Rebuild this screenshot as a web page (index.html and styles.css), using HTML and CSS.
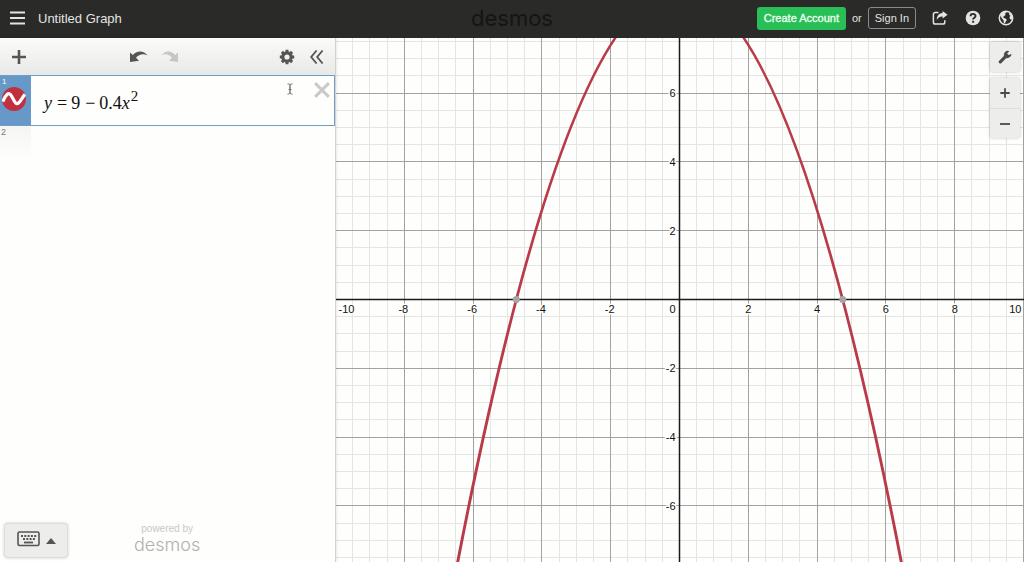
FILE: index.html
```html
<!DOCTYPE html>
<html lang="en">
<head>
<meta charset="utf-8">
<meta name="viewport" content="width=device-width, initial-scale=1">
<title>Untitled Graph</title>
<link rel="stylesheet" href="styles.css">
</head>
<body>
<header class="topbar">
  <div class="topbar-left">
    <button class="icon-btn" aria-label="Open menu">
      <svg width="16" height="14" viewBox="0 0 16 14"><path d="M0 1.500h15M0 7h15M0 12.500h15" stroke="currentColor" stroke-width="2"/></svg>
    </button>
    <span class="graph-title">Untitled Graph</span>
  </div>
  <span class="brand">desmos</span>
  <div class="topbar-right">
    <button class="btn btn-create">Create Account</button>
    <span class="or">or</span>
    <button class="btn btn-signin">Sign In</button>
    <div class="topbar-icons">
      <button class="icon-btn" aria-label="Share">
        <svg width="16" height="16" viewBox="0 0 16 16"><path d="M6.500 2.600H3.200a1.800 1.800 0 0 0-1.800 1.800v7.800A1.800 1.800 0 0 0 3.200 14h7.800a1.800 1.800 0 0 0 1.800-1.800v-2" fill="none" stroke="currentColor" stroke-width="1.500"/><path d="M10.600 1 15.600 4.800l-5 3.800V6.500C7.600 6.400 6 7.600 4.800 10 4.700 6 6.900 3.300 10.600 3.100z" fill="currentColor"/></svg>
      </button>
      <button class="icon-btn" aria-label="Help">
        <svg width="16" height="16" viewBox="0 0 16 16"><circle cx="8" cy="8" r="7.300" fill="currentColor"/><path d="M5.600 6.200C5.600 3.200 10.500 3.200 10.500 6c0 1.700-2.400 1.700-2.400 3.600" fill="none" stroke="#2a2a29" stroke-width="1.900"/><path d="M7.100 10.800h2v1.900h-2z" fill="#2a2a29"/></svg>
      </button>
      <button class="icon-btn" aria-label="Language">
        <svg width="16" height="16" viewBox="0 0 16 16"><circle cx="8" cy="8" r="6.700" fill="none" stroke="currentColor" stroke-width="1.500"/><path d="M2 4.500 4.500 2l3.600-.8.400 1.600-1.700 1 .9 1.200-2 1.300-.4 1.500 2.200.6 1.500 1.600-1.300 1.500-.7 2.100-1.200-.6-.2-2.500-1.600-2L2.800 6.400zM11.300 2.400l2.600 2.800.6 3.100-1.300 1.400-1.400-.7-.3-2 1-1.200-1.400-1z" fill="currentColor"/></svg>
      </button>
    </div>
  </div>
</header>

<main class="workspace">
  <section class="panel" aria-label="Expression list">
    <div class="toolbar">
      <button class="tool" aria-label="Add item">
        <svg width="16" height="16" viewBox="0 0 16 16"><path d="M8 1v14M1 8h14" stroke="currentColor" stroke-width="2.600"/></svg>
      </button>
      <div class="tool-group history">
        <button class="tool" aria-label="Undo">
          <svg width="18" height="12" viewBox="0 0 18 12"><path d="M0 1.500 2.800 4C6.500-.7 14-1 17.500 4.500 13.500 2 9 3 6 6.800L9 9.800 0 11z" fill="currentColor"/></svg>
        </button>
        <button class="tool" aria-label="Redo" disabled>
          <svg width="18" height="12" viewBox="0 0 18 12"><path d="M17 1.500 14.200 4C10.500-.7 4-1 .5 4.500 4.500 2 8 3 11 6.800L8 9.800l9 1.200z" fill="currentColor"/></svg>
        </button>
      </div>
      <div class="tool-group">
        <button class="tool" aria-label="Edit list">
          <svg width="16" height="16" viewBox="0 0 16 16"><circle cx="8" cy="8" r="4.200" fill="none" stroke="currentColor" stroke-width="3.200"/><path d="M8 .8v3M8 12.200v3M.8 8h3M12.200 8h3M2.900 2.900l2 2M11.100 11.100l2 2M2.900 13.100l2-2M11.100 4.900l2-2" stroke="currentColor" stroke-width="3"/></svg>
        </button>
        <button class="tool" aria-label="Hide list">
          <svg width="14" height="14" viewBox="0 0 14 14"><path d="M6.600.5 1.200 7l5.400 6.500M12.600.5 7.200 7l5.400 6.500" fill="none" stroke="currentColor" stroke-width="1.800"/></svg>
        </button>
      </div>
    </div>

    <div class="expression selected">
      <div class="tab">
        <span class="index">1</span>
        <button class="curve-toggle" aria-label="Hide curve">
          <svg width="24" height="24" viewBox="0 0 24 24"><circle cx="12" cy="12" r="12" fill="#c0303f"/><path d="M.8 14.500C3.500 8.500 6.500 3.500 9.500 9S14 19 17 15.500 20.500 10 23 7.500" fill="none" stroke="#fff" stroke-width="3.200"/></svg>
        </button>
      </div>
      <div class="formula" role="textbox" aria-label="Expression 1" contenteditable="true" spellcheck="false"><i>y</i><span class="op">=</span>9<span class="op">−</span>0.4<i>x</i><sup>2</sup></div>
      <svg class="caret-pointer" width="6" height="12" viewBox="0 0 6 12"><path d="M.5.8Q3 .8 3 2.500v7q0 1.700-2.500 1.700M5.500.8Q3 .8 3 2.500v7q0 1.700 2.500 1.700M1.500 6.500h3" fill="none" stroke="#777" stroke-width="1"/></svg>
      <button class="remove" aria-label="Delete expression">
        <svg width="16" height="16" viewBox="0 0 14 14"><path d="m1 1 12 12M13 1 1 13" stroke="currentColor" stroke-width="2.600"/></svg>
      </button>
    </div>
    <div class="expression">
      <div class="tab tab-empty"><span class="index">2</span></div>
    </div>

    <footer class="panel-footer">
      <button class="keypad" aria-label="Show keypad">
        <svg width="23" height="16" viewBox="0 0 23 16"><rect x="1" y="1" width="21" height="13.500" rx="1.500" fill="none" stroke="currentColor" stroke-width="1.600"/><path d="M4 5h15.500M6 8h12" stroke="currentColor" stroke-width="2" stroke-dasharray="2 1.300"/><path d="M7 11.500h9" stroke="currentColor" stroke-width="1.800"/></svg>
        <svg width="10" height="6" viewBox="0 0 10 6"><path d="M0 6 5 0l5 6z" fill="currentColor"/></svg>
      </button>
      <div class="powered"><span>powered by</span><span class="powered-name">desmos</span></div>
    </footer>
  </section>

  <section class="graph" aria-label="Graph">
    <svg class="plot" viewBox="-343.5 -261.5 688 524" preserveAspectRatio="xMidYMid slice" role="img" aria-label="y = 9 - 0.4x squared">
      <g id="grid"></g>
      <g id="labels"></g>
      <path class="curve" d="M-275.200 571.040Q0-1190.240 275.200 571.040"/>
      <circle class="root" cx="-163.200" cy="0" r="3.500"/>
      <circle class="root" cx="163.200" cy="0" r="3.500"/>
    </svg>
    <div class="graph-controls">
      <button class="control" aria-label="Graph settings">
        <svg width="14" height="14" viewBox="0 0 14 14"><path d="M2.300 11.800 8.500 5.700" stroke="currentColor" stroke-width="3.200" stroke-linecap="round"/><path d="M11.300 1.200A4 4 0 0 0 6 6.200c.5 2 4.500 3.400 7.200-.6l.3-1.600-2.800 1-1.600-1.500z" fill="currentColor"/></svg>
      </button>
      <div class="zoom">
        <button class="control" aria-label="Zoom in"><svg width="10" height="10" viewBox="0 0 10 10"><path d="M5 .3v9.400M.3 5h9.400" stroke="currentColor" stroke-width="1.800"/></svg></button>
        <button class="control" aria-label="Zoom out"><svg width="10" height="10" viewBox="0 0 10 10"><path d="M0 5h10" stroke="currentColor" stroke-width="1.800"/></svg></button>
      </div>
    </div>
  </section>
</main>
<script src="graph.js"></script>
</body>
</html>
```
FILE: styles.css
```css
* { box-sizing: border-box; }
body {
  margin: 0;
  height: 100vh;
  display: flex;
  flex-direction: column;
  overflow: hidden;
  font-family: "Liberation Sans", Arial, sans-serif;
  background: #fefefc;
}
button {
  margin: 0;
  padding: 0;
  border: 0;
  background: none;
  color: inherit;
  font: inherit;
  display: flex;
  align-items: center;
  justify-content: center;
}
svg { display: block; flex: none; }

.topbar {
  flex: none;
  height: 38px;
  padding: 0 10px 2px;
  display: grid;
  grid-template-columns: 1fr auto 1fr;
  align-items: center;
  background: #2a2a29;
  color: #e4e4e2;
}
.topbar-left { display: flex; align-items: center; gap: 12px; }
.graph-title { font-size: 13px; }
.brand {
  font-family: Inter, sans-serif;
  font-size: 22px;
  line-height: 24px;
  color: #151514;
}
.topbar-right {
  display: flex;
  align-items: center;
  justify-content: flex-end;
  font-size: 11px;
}
.btn { height: 22px; border-radius: 3px; padding: 0 6px; }
.btn-create {
  height: 23px;
  background: #27bf56;
  color: #f4fff6;
  padding: 0 7px;
  -webkit-text-stroke: 0.3px;
}
.btn-signin { border: 1px solid #8b8b89; }
.or { margin: 0 6px; }
.topbar-icons { display: flex; gap: 17px; margin-left: 16px; }

.workspace { flex: 1; min-height: 0; display: flex; }
.panel {
  position: relative;
  z-index: 1;
  width: 336px;
  flex: none;
  display: flex;
  flex-direction: column;
  background: #fefefc;
  border-right: 1px solid #d2d2d0;
  box-shadow: 0 0 3px rgba(0, 0, 0, 0.15);
}
.toolbar {
  height: 37px;
  flex: none;
  padding: 0 11px;
  display: flex;
  align-items: center;
  justify-content: space-between;
  background: linear-gradient(#fbfbf9, #e8e8e7);
  color: #555;
}
.tool-group { display: flex; align-items: center; gap: 15px; }
.history { gap: 13px; margin-left: 2px; }
.tool:disabled { color: #c6c6c4; }

.expression { display: flex; min-height: 36px; }
.selected { min-height: 51px; border: 1px solid #6f9fc9; border-left: 0; }
.tab {
  width: 31px;
  flex: none;
  padding: 1px;
  background: linear-gradient(#f5f5f4, #fefefc);
}
.selected .tab { background: #6699c8; padding: 1px 2px; }
.index { display: block; font-size: 9px; line-height: 10px; color: #777; }
.selected .index { color: #fff; font-size: 8px; }
.curve-toggle { border-radius: 50%; }
.formula {
  flex: 1;
  align-self: center;
  padding: 4px 0 0 13px;
  font-family: "Liberation Serif", "Times New Roman", serif;
  font-size: 18px;
  line-height: 24px;
  color: #111;
  outline: none;
}
.formula sup { font-size: 15px; line-height: 0; vertical-align: 8px; margin-left: 1px; }
.op { margin: 0 4px 0 5px; }
.caret-pointer { margin-top: 7px; }
.remove { align-self: flex-start; margin: 6px 4px 0 21px; color: #c9c9c7; }

.panel-footer {
  margin-top: auto;
  padding: 0 0 4px 4px;
  display: flex;
  align-items: flex-end;
  gap: 66px;
}
.keypad {
  width: 64px;
  height: 35px;
  gap: 6px;
  padding: 0 0 3px;
  border: 1px solid #dededc;
  border-radius: 4px;
  background: #ededec;
  box-shadow: 0 0 3px rgba(0, 0, 0, 0.2);
  color: #555;
}
.keypad svg + svg { margin-top: 3px; }
.powered {
  display: flex;
  flex-direction: column;
  align-items: center;
  padding-bottom: 2px;
  font-size: 10px;
  line-height: 10px;
  color: #c8c8c6;
}
.powered-name {
  font-family: Inter, sans-serif;
  font-size: 18px;
  line-height: 22px;
  font-weight: 300;
  color: #b0b0ae;
}

.graph { position: relative; flex: 1; min-width: 0; overflow: hidden; }
.plot { width: 100%; height: 100%; }
.minor { stroke: #e5e5e3; }
.major { stroke: #a2a2a0; }
.axis { stroke: #1b1b1a; stroke-width: 1.5; }
.label {
  font-size: 11px;
  fill: #111;
  stroke: #fefefc;
  stroke-width: 3;
  stroke-linejoin: round;
  paint-order: stroke;
}
.curve { fill: none; stroke: #b93b49; stroke-width: 3; }
.root { fill: #a5a5a4; }

.graph-controls {
  position: absolute;
  top: 4px;
  right: 4px;
  display: flex;
  flex-direction: column;
  gap: 6px;
  color: #4b4b4a;
}
.control { width: 30px; height: 30px; }
.graph-controls > .control,
.zoom {
  background: #ededec;
  border-radius: 3px;
  box-shadow: 0 0 3px rgba(0, 0, 0, 0.25);
}
.zoom .control + .control { border-top: 1px solid #dededc; }
```
FILE: graph.js
```js
const NS = "http://www.w3.org/2000/svg";
const UNIT = 34.4;
const grid = document.getElementById("grid");
const labels = document.getElementById("labels");

function line(x1, y1, x2, y2, cls) {
  const el = document.createElementNS(NS, "line");
  Object.entries({ x1, y1, x2, y2, class: cls }).forEach(([k, v]) => el.setAttribute(k, v));
  grid.append(el);
}

function label(text, x, y, anchor) {
  const el = document.createElementNS(NS, "text");
  Object.entries({ x, y, class: "label", "text-anchor": anchor }).forEach(([k, v]) => el.setAttribute(k, v));
  el.textContent = text;
  labels.append(el);
}

const steps = Array.from({ length: 81 }, (_, i) => i - 40);
for (const kind of ["minor", "major", "axis"]) {
  for (const n of steps) {
    const type = n === 0 ? "axis" : n % 4 === 0 ? "major" : "minor";
    if (type !== kind) continue;
    const p = Math.round(n * UNIT / 2);
    line(p, -700, p, 700, kind);
    line(-700, p, 700, p, kind);
  }
}

for (let n = -8; n <= 8; n += 2) {
  if (n === 0) continue;
  label(n, n * UNIT + (n < 0 ? -1 : 0), 13, "middle");
  if (Math.abs(n) <= 6) label(n, -4, -n * UNIT + 4, "end");
}
label("0", -4, 13, "end");
label("-10", -341, 13, "start");
label("10", 342, 13, "end");
```
